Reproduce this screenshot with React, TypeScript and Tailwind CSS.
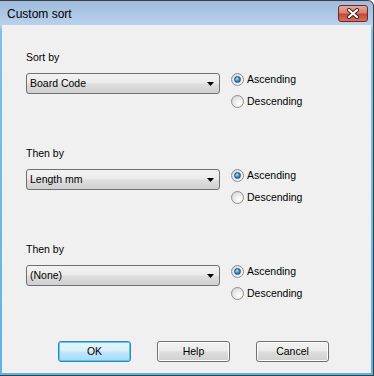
import React, { useState } from 'react'

const font = { fontFamily: '"Liberation Sans", Arial, sans-serif' }

const Radio = ({ checked, label, onClick }: { checked: boolean; label: string; onClick: () => void }) => (
  <div className="flex h-[13px] items-center gap-[3px] cursor-default" onClick={onClick}>
    <div className="flex h-[13px] w-[13px] items-center justify-center rounded-full border border-[#8c8e8f] bg-[radial-gradient(circle_at_65%_70%,#ffffff_0%,#e9e9e9_50%,#cfcfcf_100%)]">
      {checked && (
        <div className="h-[7px] w-[7px] rounded-full border border-[#1d4f7c] bg-[radial-gradient(circle_at_40%_35%,#b9e3ff_0%,#3f98d8_45%,#124d84_100%)]" />
      )}
    </div>
    <span className="text-[10.5px] leading-[13px] text-black">{label}</span>
  </div>
)

const Combo = ({ value }: { value: string }) => (
  <div className="flex h-[21px] w-[194px] items-center justify-between rounded-[3px] border border-[#707070] bg-[linear-gradient(#f3f3f3_0%,#ebebeb_45%,#dddddd_55%,#cfcfcf_100%)] pl-[3px] pr-[5px]">
    <span className="text-[10.5px] leading-[13px] text-black">{value}</span>
    <svg width="7" height="4" viewBox="0 0 7 4">
      <path d="M0 0H7L3.5 4Z" fill="#000" />
    </svg>
  </div>
)

const SortGroup = ({ label, value }: { label: string; value: string }) => {
  const [asc, setAsc] = useState(true)
  return (
    <div className="flex h-[96px] flex-col">
      <div className="h-[13px] text-[10.5px] leading-[13px] text-black">{label}</div>
      <div className="mt-[9px] flex gap-[11px]">
        <Combo value={value} />
        <div className="flex flex-col gap-[9px]">
          <Radio checked={asc} label="Ascending" onClick={() => setAsc(true)} />
          <Radio checked={!asc} label="Descending" onClick={() => setAsc(false)} />
        </div>
      </div>
    </div>
  )
}

const Btn = ({ children, def }: { children: React.ReactNode; def?: boolean }) => (
  <button
    className={
      'h-[21px] w-[73px] rounded-[3px] border text-[10.5px] leading-[13px] text-black ' +
      (def
        ? 'border-[#3c7fb1] bg-[linear-gradient(#eaf6fd_0%,#d9f0fc_45%,#bee6fd_55%,#a7d9f5_100%)] shadow-[inset_0_0_0_1px_#48d0f8]'
        : 'border-[#707070] bg-[linear-gradient(#f2f2f2_0%,#ebebeb_45%,#dddddd_55%,#cfcfcf_100%)] shadow-[inset_0_0_0_1px_#fcfcfc]')
    }
  >
    {children}
  </button>
)

export default function App() {
  return (
    <div style={font} className="h-[376px] w-[374px] overflow-hidden">
      <div className="flex h-full w-full flex-col rounded-tr-[6px] border-t border-r border-b border-[#3a3f45] bg-[linear-gradient(#9fbbdc_0px,#b9d1ec_24px,#7cc0ea_30px,#5fb2e6_100%)]">
        <div className="flex h-[24px] shrink-0 items-start justify-between pl-[7px] pr-[5px] pt-[4px]">
          <span className="mt-[2px] text-[12px] leading-[14px] text-black">Custom sort</span>
          <div className="flex h-[17px] w-[30px] items-center justify-center rounded-[3px] border border-[#6d2a26] bg-[linear-gradient(#e9a99c_0%,#d7806f_45%,#c24a37_55%,#d4715c_100%)]">
            <svg width="14" height="11" viewBox="0 0 14 11">
              <path d="M3 2L11 9M11 2L3 9" stroke="#3a1b18" strokeWidth="4" strokeLinecap="round" />
              <path d="M3 2L11 9M11 2L3 9" stroke="#ffffff" strokeWidth="2.2" strokeLinecap="round" />
            </svg>
          </div>
        </div>
        <div className="mx-[2px] mb-[2px] flex flex-1 flex-col bg-[#f0f0f0] pl-[24px] pt-[26px]">
          <SortGroup label="Sort by" value="Board Code" />
          <SortGroup label="Then by" value="Length mm" />
          <SortGroup label="Then by" value="(None)" />
          <div className="mt-[2px] flex gap-[26px] pl-[32px]">
            <Btn def>OK</Btn>
            <Btn>Help</Btn>
            <Btn>Cancel</Btn>
          </div>
        </div>
      </div>
    </div>
  )
}
